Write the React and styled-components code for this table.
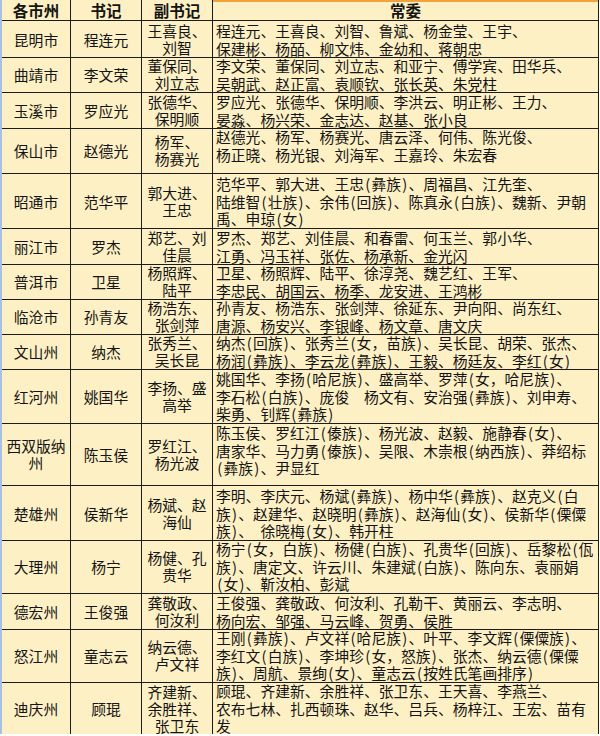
import React from 'react';
import styled, { createGlobalStyle } from 'styled-components';

const GlobalStyle = createGlobalStyle`
  html, body {
    margin: 0;
    padding: 0;
    background: #ffffff;
  }
  body {
    font-family: "Noto Sans CJK SC", "Noto Sans", sans-serif;
  }
`;

const COLS = '69px 71px 71px 386px';
const LINE = '#1c1c1c';

// Styled components
const Sheet = styled.div`
    width: 599px;
    box-sizing: border-box;
    border-left: 2px solid #a6c1e4;
    background: #fdf0c4;
    color: #141414;
    font-size: 14.8px;
    line-height: 17.7px;
`;

const Row = styled.div`
    display: grid;
    grid-template-columns: ${COLS};
    height: ${(p) => p.h}px;
`;

const Cell = styled.div`
    box-sizing: border-box;
    border-right: 1px solid ${LINE};
    border-bottom: 1px solid ${LINE};
    white-space: nowrap;
`;

const HeadCell = styled(Cell)`
    display: flex;
    align-items: center;
    justify-content: center;
    font-size: 15.5px;
    font-weight: 700;
    line-height: 18px;
    ${(p) => p.accent && 'box-shadow: inset 0 2px 0 #f2a23a;'}
`;

const CenterCell = styled(Cell)`
    display: flex;
    flex-direction: column;
    align-items: center;
    justify-content: center;
    text-align: center;
    line-height: 17px;
`;

const MemberCell = styled(Cell)`
    padding: 1px 0 0 3px;
`;

const Line = styled.div`
    display: block;
`;

const Half = styled.span`
    display: inline-block;
    width: 7.4px;
    text-align: center;
`;

// half-width characters (parens, spaces) take half a cell, as in the sheet
const fmt = (s) =>
    s.split(/([() ])/).map((part, i) =>
        /^[() ]$/.test(part) ? <Half key={i}>{part === ' ' ? '\u00a0' : part}</Half> : part
    );

const rows = [
    {
        h: 35, city: ['昆明市'], sec: '程连元', dep: ['王喜良、', '刘智'],
        mem: ['程连元、王喜良、刘智、鲁斌、杨金莹、王宇、', '保建彬、杨皕、柳文炜、金幼和、蒋朝忠'],
    },
    {
        h: 36, city: ['曲靖市'], sec: '李文荣', dep: ['董保同、', '刘立志'],
        mem: ['李文荣、董保同、刘立志、和亚宁、傅学宾、田华兵、', '吴朝武、赵正富、袁顺钦、张长英、朱党柱'],
    },
    {
        h: 35, city: ['玉溪市'], sec: '罗应光', dep: ['张德华、', '保明顺'],
        mem: ['罗应光、张德华、保明顺、李洪云、明正彬、王力、', '晏淼、杨兴荣、金志达、赵基、张小良'],
    },
    {
        h: 47, city: ['保山市'], sec: '赵德光', dep: ['杨军、', '杨赛光'],
        mem: ['赵德光、杨军、杨赛光、唐云泽、何伟、陈光俊、', '杨正晓、杨光银、刘海军、王嘉玲、朱宏春'],
    },
    {
        h: 54, city: ['昭通市'], sec: '范华平', dep: ['郭大进、', '王忠'],
        mem: [
            '范华平、郭大进、王忠(彝族)、周福昌、江先奎、',
            '陆维智(壮族)、余伟(回族)、陈真永(白族)、魏新、尹朝',
            '禹、申琼(女)',
        ],
    },
    {
        h: 35, city: ['丽江市'], sec: '罗杰', dep: ['郑艺、刘', '佳晨'],
        mem: ['罗杰、郑艺、刘佳晨、和春雷、何玉兰、郭小华、', '江勇、冯玉祥、张佐、杨承新、金光闪'],
    },
    {
        h: 35, city: ['普洱市'], sec: '卫星', dep: ['杨照辉、', '陆平'],
        mem: ['卫星、杨照辉、陆平、徐淳尧、魏艺红、王军、', '李忠民、胡国云、杨季、龙安进、王鸿彬'],
    },
    {
        h: 35, city: ['临沧市'], sec: '孙青友', dep: ['杨浩东、', '张剑萍'],
        mem: ['孙青友、杨浩东、张剑萍、徐延东、尹向阳、尚东红、', '唐源、杨安兴、李银峰、杨文章、唐文庆'],
    },
    {
        h: 36, city: ['文山州'], sec: '纳杰', dep: ['张秀兰、', '吴长昆'],
        mem: ['纳杰(回族)、张秀兰(女，苗族)、吴长昆、胡荣、张杰、', '杨润(彝族)、李云龙(彝族)、王毅、杨廷友、李红(女)'],
    },
    {
        h: 54, city: ['红河州'], sec: '姚国华', dep: ['李扬、盛', '高举'],
        mem: [
            '姚国华、李扬(哈尼族)、盛高举、罗萍(女，哈尼族)、',
            '李石松(白族)、庞俊  杨文有、安治强(彝族)、刘申寿、',
            '柴勇、钊辉(彝族)',
        ],
    },
    {
        h: 63, city: ['西双版纳', '州'], sec: '陈玉侯', dep: ['罗红江、', '杨光波'],
        mem: [
            '陈玉侯、罗红江(傣族)、杨光波、赵毅、施静春(女)、',
            '唐家华、马力勇(傣族)、吴限、木崇根(纳西族)、莽绍标',
            '(彝族)、尹显红',
        ],
    },
    {
        h: 53, city: ['楚雄州'], sec: '侯新华', dep: ['杨斌、赵', '海仙'],
        mem: [
            '李明、李庆元、杨斌(彝族)、杨中华(彝族)、赵克义(白',
            '族)、赵建华、赵晓明(彝族)、赵海仙(女)、侯新华(傈僳',
            '族)、 徐晓梅(女)、韩开柱',
        ],
    },
    {
        h: 54, city: ['大理州'], sec: '杨宁', dep: ['杨健、孔', '贵华'],
        mem: [
            '杨宁(女，白族)、杨健(白族)、孔贵华(回族)、岳黎松(佤',
            '族)、唐定文、许云川、朱建斌(白族)、陈向东、袁丽娟',
            '(女)、靳汝柏、彭斌',
        ],
    },
    {
        h: 35, city: ['德宏州'], sec: '王俊强', dep: ['龚敬政、', '何汝利'],
        mem: ['王俊强、龚敬政、何汝利、孔勒干、黄丽云、李志明、', '杨向宏、邹强、马云峰、贺勇、侯胜'],
    },
    {
        h: 53, city: ['怒江州'], sec: '童志云', dep: ['纳云德、', '卢文祥'],
        mem: [
            '王刚(彝族)、卢文祥(哈尼族)、叶平、李文辉(傈僳族)、',
            '李红文(白族)、李坤珍(女，怒族)、张杰、纳云德(傈僳',
            '族)、周航、景绚(女)、童志云(按姓氏笔画排序)',
        ],
    },
    {
        h: 53, city: ['迪庆州'], sec: '顾琨', dep: ['齐建新、', '余胜祥、', '张卫东'],
        mem: [
            '顾琨、齐建新、余胜祥、张卫东、王天喜、李燕兰、',
            '农布七林、扎西顿珠、赵华、吕兵、杨梓江、王宏、苗有',
            '发',
        ],
    },
];

const App = () => {
    return (
        <>
            <GlobalStyle />
            <Sheet>
                <Row h={21}>
                    <HeadCell>各市州</HeadCell>
                    <HeadCell>书记</HeadCell>
                    <HeadCell>副书记</HeadCell>
                    <HeadCell accent>常委</HeadCell>
                </Row>
                {rows.map((r) => (
                    <Row key={r.sec} h={r.h}>
                        <CenterCell>
                            {r.city.map((c) => <Line key={c}>{c}</Line>)}
                        </CenterCell>
                        <CenterCell>{r.sec}</CenterCell>
                        <CenterCell>
                            {r.dep.map((d) => <Line key={d}>{d}</Line>)}
                        </CenterCell>
                        <MemberCell>
                            {r.mem.map((m, i) => <Line key={i}>{fmt(m)}</Line>)}
                        </MemberCell>
                    </Row>
                ))}
            </Sheet>
        </>
    );
};

export default App;
